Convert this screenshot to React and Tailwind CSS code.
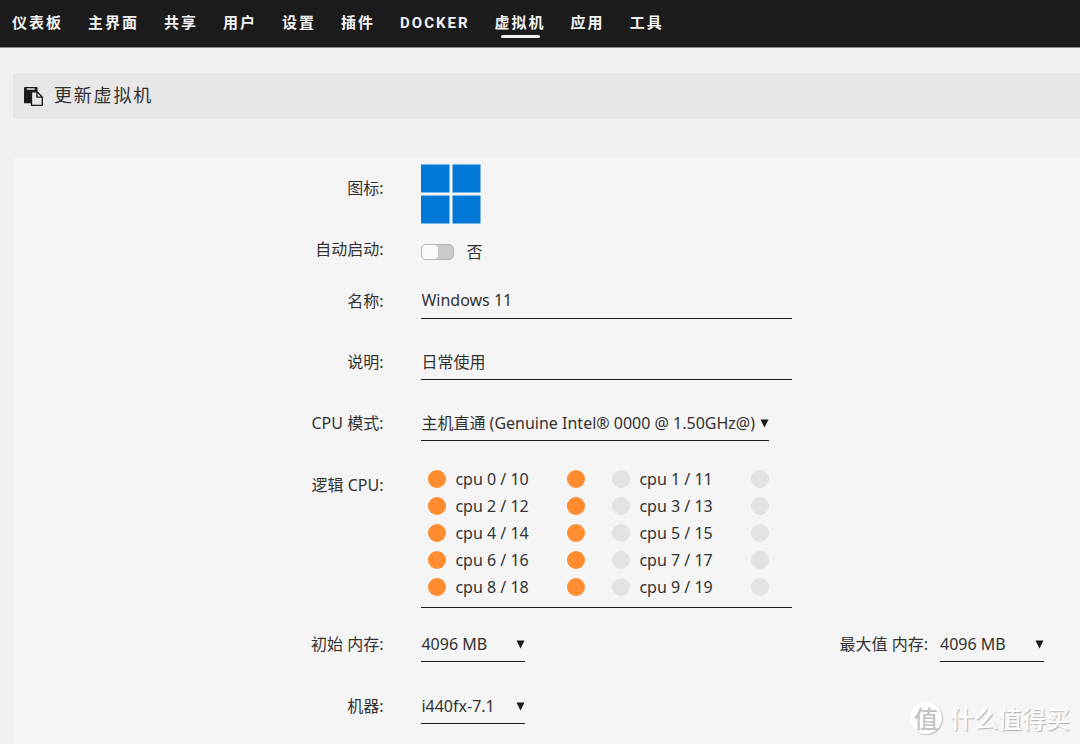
import React, { useState } from 'react';

const NAV_ITEMS = ['仪表板', '主界面', '共享', '用户', '设置', '插件', 'DOCKER', '虚拟机', '应用', '工具'];

const CORES = [
  { id: 0, sibling: 10 },
  { id: 1, sibling: 11 },
  { id: 2, sibling: 12 },
  { id: 3, sibling: 13 },
  { id: 4, sibling: 14 },
  { id: 5, sibling: 15 },
  { id: 6, sibling: 16 },
  { id: 7, sibling: 17 },
  { id: 8, sibling: 18 },
  { id: 9, sibling: 19 },
];

const PINNED = [0, 2, 4, 6, 8, 10, 12, 14, 16, 18];

function PasteIcon() {
  return (
    <svg viewBox="0 0 1792 1792" className="size-[19px] shrink-0" fill="currentColor" aria-hidden="true">
      <path d="M768 1664h896v-640h-416q-40 0-68-28t-28-68v-416h-384v1152zm256-1440v-64q0-13-9.5-22.5t-22.5-9.5h-704q-13 0-22.5 9.5t-9.5 22.5v64q0 13 9.5 22.5t22.5 9.5h704q13 0 22.5-9.5t9.5-22.5zm256 672h299l-299-299v299zm512 128v672q0 40-28 68t-68 28h-960q-40 0-68-28t-28-68v-160h-544q-40 0-68-28t-28-68v-1344q0-40 28-68t68-28h1088q40 0 68 28t28 68v328q21 13 36 28l408 408q28 28 48 76t20 88z" />
    </svg>
  );
}

function WindowsLogo() {
  return (
    <svg viewBox="0 0 60 60" className="size-[60px]" fill="#0078d7" aria-hidden="true">
      <path d="M0 .5h28.500v28h-28.500zM31.500 .5h28v28h-28zM0 31.500h28.500v28h-28.500zM31.500 31.500h28v28h-28z" />
    </svg>
  );
}

function Row({ label, htmlFor, labelClass = 'h-[37px]', children }) {
  const Tag = htmlFor ? 'label' : 'span';
  return (
    <div className="grid grid-cols-[35%_1fr] gap-x-[35px] items-start">
      <Tag htmlFor={htmlFor} className={`flex items-center justify-end pr-[3px] ${labelClass}`}>
        {label}
      </Tag>
      <div>{children}</div>
    </div>
  );
}

function Select({ id, option, width = 'w-[104px]' }) {
  return (
    <div className={`relative ${width}`}>
      <select id={id} className="block w-full h-[37px] pt-0.5 appearance-none bg-transparent border-b border-[#1c1b1b] outline-none">
        <option>{option}</option>
      </select>
      <svg viewBox="0 0 9 9" className="absolute right-0 top-[15px] size-[9px] pointer-events-none" fill="#1c1b1b" aria-hidden="true">
        <path d="M.5 .5h8l-4 8z" />
      </svg>
    </div>
  );
}

function TextField({ id, defaultValue }) {
  return (
    <input
      id={id}
      type="text"
      defaultValue={defaultValue}
      className="block w-[371px] h-[37px] bg-transparent border-b border-[#1c1b1b] outline-none"
    />
  );
}

function CpuBox({ cpu, labelId, checked, onToggle }) {
  return (
    <input
      type="checkbox"
      id={`cpu-${cpu}`}
      aria-labelledby={labelId}
      checked={checked}
      onChange={() => onToggle(cpu)}
      className="size-[18px] shrink-0 appearance-none rounded-full bg-[#e3e3e3] checked:bg-[#ff8c2f]"
    />
  );
}

export default function App() {
  const [autostart, setAutostart] = useState(false);
  const [pinned, setPinned] = useState(PINNED);

  const toggleCpu = (cpu) => {
    setPinned((prev) => (prev.includes(cpu) ? prev.filter((c) => c !== cpu) : [...prev, cpu]));
  };

  return (
    <div className="relative min-h-screen flex flex-col overflow-hidden bg-[#f1f1f1] text-[#333232] text-base font-['Noto_Sans','Noto_Sans_CJK_SC',sans-serif]">
      <nav className="h-12 flex gap-[25px] pl-3 bg-[#1c1b1b] border-b border-[#8a8a8a] text-[#f2f2f2] text-[15px] font-bold tracking-[2px] whitespace-nowrap font-['Roboto','Noto_Sans_CJK_SC',sans-serif]">
        {NAV_ITEMS.map((item) => (
          <a key={item} href="#" className="relative flex items-center">
            {item}
            {item === '虚拟机' && (
              <span className="absolute inset-x-1.5 bottom-[9px] h-[3px] rounded-full bg-[#f2f2f2]" />
            )}
          </a>
        ))}
      </nav>

      <header className="mt-[25px] ml-[13px] h-[46px] flex items-center gap-[11px] pl-[11px] bg-[#e7e7e7] text-[#1c1b1b]">
        <PasteIcon />
        <h1 className="pb-0.5 text-lg tracking-widest text-[#333232]">更新虚拟机</h1>
      </header>

      <form className="mt-[39px] ml-[13px] flex-1 pt-1.5 pb-5 bg-[#f5f5f5]">
        <div className="flex flex-col gap-3">
          <Row label="图标:" labelClass="h-12">
            <WindowsLogo />
          </Row>
          <Row label="自动启动:" htmlFor="autostart" labelClass="h-[26px]">
            <div className="flex items-center gap-3 h-8">
              <input
                id="autostart"
                type="checkbox"
                role="switch"
                checked={autostart}
                onChange={(e) => setAutostart(e.target.checked)}
                className="relative w-[33px] h-4 appearance-none rounded-[5px] border border-[#b5b5b5] bg-[#cacaca] checked:bg-[#ff8c2f] before:block before:w-4 before:h-full before:rounded-[4px] before:bg-[#fbfbfb] checked:before:ml-auto"
              />
              <span>{autostart ? '是' : '否'}</span>
            </div>
          </Row>
        </div>

        <div className="mt-3.5 flex flex-col gap-6">
          <Row label="名称:" htmlFor="name">
            <TextField id="name" defaultValue="Windows 11" />
          </Row>
          <Row label="说明:" htmlFor="description">
            <TextField id="description" defaultValue="日常使用" />
          </Row>
          <Row label="CPU 模式:" htmlFor="cpu-mode">
            <Select id="cpu-mode" option="主机直通 (Genuine Intel® 0000 @ 1.50GHz@)" width="w-[348px]" />
          </Row>
          <Row label="逻辑 CPU:" labelClass="h-10">
            <div className="w-[371px] grid grid-cols-[157px_157px] gap-x-[27px] pl-[7px] pb-[7px] border-b border-[#1c1b1b]">
              {CORES.map(({ id, sibling }) => (
                <div key={id} className="flex items-center gap-[9px] h-[27px]">
                  <CpuBox cpu={id} labelId={`core-${id}`} checked={pinned.includes(id)} onToggle={toggleCpu} />
                  <label id={`core-${id}`} htmlFor={`cpu-${id}`} className="flex-1">
                    cpu {id} / {sibling}
                  </label>
                  <CpuBox cpu={sibling} labelId={`core-${id}`} checked={pinned.includes(sibling)} onToggle={toggleCpu} />
                </div>
              ))}
            </div>
          </Row>
        </div>

        <div className="mt-[17px] flex flex-col gap-[25px]">
          <Row label="初始 内存:" htmlFor="memory">
            <div className="flex justify-between pr-9">
              <Select id="memory" option="4096 MB" />
              <div className="flex gap-3">
                <label htmlFor="max-memory" className="flex items-center h-[37px]">最大值 内存:</label>
                <Select id="max-memory" option="4096 MB" />
              </div>
            </div>
          </Row>
          <Row label="机器:" htmlFor="machine">
            <Select id="machine" option="i440fx-7.1" />
          </Row>
        </div>
      </form>

      <div className="absolute right-2.5 bottom-2 flex items-center gap-2 text-white pointer-events-none font-['Noto_Sans_CJK_SC',sans-serif]">
        <span className="flex items-center justify-center size-8 rounded-full bg-white text-[#c4c4c4] text-2xl leading-none font-medium shadow-[1px_1px_1px_#bdbdbd]">值</span>
        <span className="text-2xl leading-9 font-medium [text-shadow:1px_1px_1px_#b0b0b0]">什么值得买</span>
      </div>
    </div>
  );
}
